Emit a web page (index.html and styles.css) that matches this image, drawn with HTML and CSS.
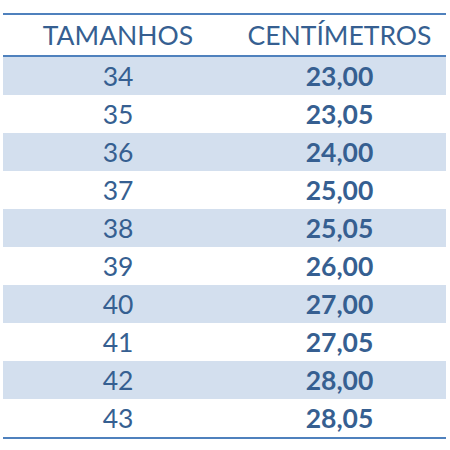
FILE: index.html
```html
<!DOCTYPE html>
<html lang="pt">
<head>
<meta charset="utf-8">
<title>Tamanhos</title>
<link rel="stylesheet" href="styles.css">
</head>
<body>
<div class="size-table">
  <div class="row head">
    <div class="cell">TAMANHOS</div>
    <div class="cell">CENTÍMETROS</div>
  </div>
  <div class="row band"><div class="cell">34</div><div class="cell val">23,00</div></div>
  <div class="row"><div class="cell">35</div><div class="cell val">23,05</div></div>
  <div class="row band"><div class="cell">36</div><div class="cell val">24,00</div></div>
  <div class="row"><div class="cell">37</div><div class="cell val">25,00</div></div>
  <div class="row band"><div class="cell">38</div><div class="cell val">25,05</div></div>
  <div class="row"><div class="cell">39</div><div class="cell val">26,00</div></div>
  <div class="row band"><div class="cell">40</div><div class="cell val">27,00</div></div>
  <div class="row"><div class="cell">41</div><div class="cell val">27,05</div></div>
  <div class="row band"><div class="cell">42</div><div class="cell val">28,00</div></div>
  <div class="row"><div class="cell">43</div><div class="cell val">28,05</div></div>
</div>
</body>
</html>
```
FILE: styles.css
```css
html, body {
  margin: 0;
  padding: 0;
  background: #ffffff;
}
body {
  font-family: Lato, "Open Sans", sans-serif;
  color: #365f91;
}
.size-table {
  margin: 13px 0 0 3px;
  width: 443px;
  border-top: 2px solid #4f81bd;
  border-bottom: 2px solid #4f81bd;
}
.row {
  display: grid;
  grid-template-columns: 230px 1fr;
  height: 38px;
  align-items: center;
}
.row.head {
  height: 40px;
  border-bottom: 2px solid #4f81bd;
}
.row.band {
  background: #d3dfee;
}
.cell {
  text-align: center;
  font-size: 26.5px;
  line-height: 1;
}
.val {
  font-weight: 700;
}
```
